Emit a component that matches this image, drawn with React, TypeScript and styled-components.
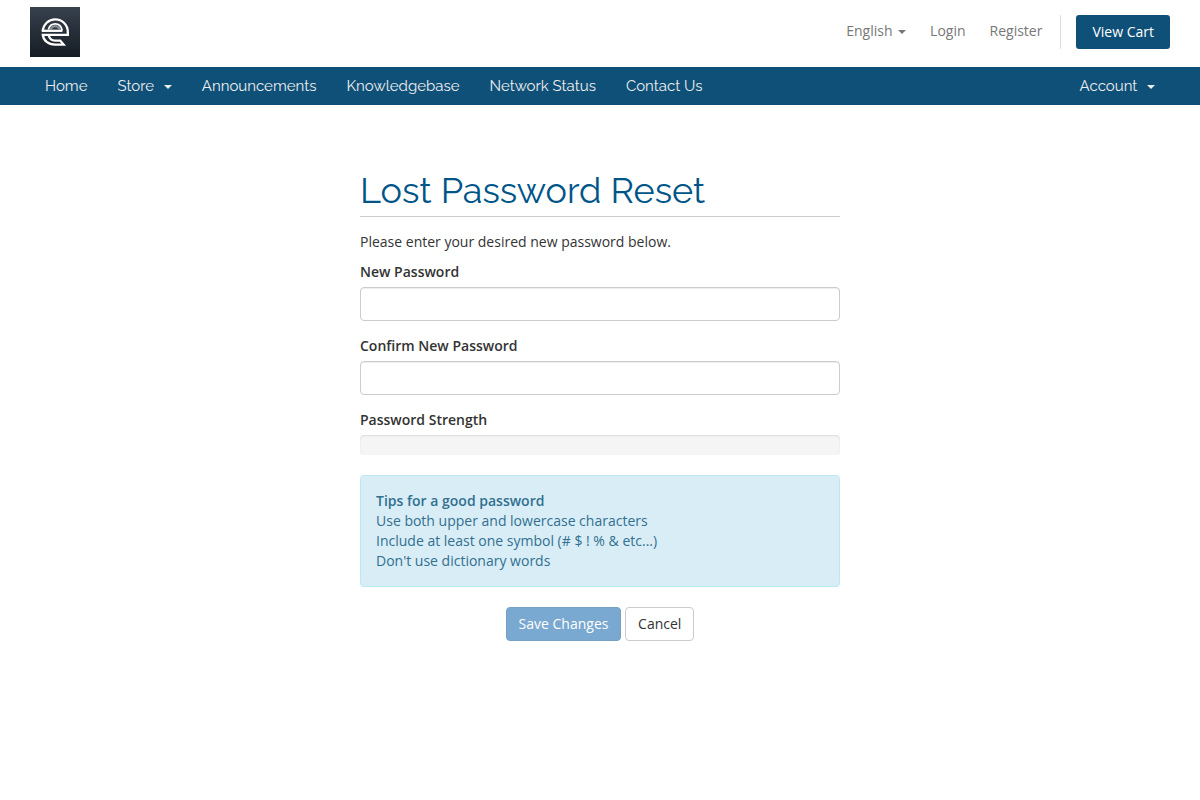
import React from "react";
import styled, { createGlobalStyle } from "styled-components";

const GlobalStyle = createGlobalStyle`
  *, *::before, *::after { box-sizing: border-box; }
  body {
    margin: 0;
    background: #fff;
    color: #333;
    font-family: "Open Sans", Verdana, Tahoma, sans-serif;
    font-size: 14px;
    line-height: 20px;
  }
  button, input { font: inherit; }
`;

const Header = styled.header`
  display: flex;
  justify-content: space-between;
  align-items: flex-start;
  padding: 7px 30px 10px;
`;

const LogoLink = styled.a`
  display: block;
  height: 50px;
  svg { display: block; }
`;

const TopMenu = styled.ul`
  display: flex;
  margin: 8px 0 0;
  padding: 0;
  list-style: none;
`;

const TopItem = styled.li<{ $action?: boolean }>`
  display: flex;
  margin-left: ${(p) => (p.$action ? "6px" : "0")};
  padding-left: ${(p) => (p.$action ? "15px" : "0")};
  border-left: ${(p) => (p.$action ? "1px solid #ddd" : "0")};
`;

const TopLink = styled.a`
  padding: 6px 12px;
  color: #777;
  text-decoration: none;
`;

const Caret = styled.b`
  display: inline-block;
  margin-left: 2px;
  vertical-align: middle;
  border-top: 4px solid;
  border-right: 4px solid transparent;
  border-left: 4px solid transparent;
`;

const CartLink = styled.a`
  padding: 7px 16px;
  border-radius: 3px;
  background: #0f5078;
  color: #fff;
  text-decoration: none;
`;

const NavBar = styled.nav`
  display: flex;
  justify-content: space-between;
  padding: 0 30px;
  background: #0f5078;
`;

const NavList = styled.ul`
  display: flex;
  margin: 0;
  padding: 0;
  list-style: none;
`;

const NavLink = styled.a`
  display: block;
  padding: 9px 15px;
  color: #eee;
  font-family: Raleway, Lato, "Open Sans", sans-serif;
  font-size: 15px;
  text-decoration: none;
`;

const Main = styled.main`
  max-width: 480px;
  margin: 0 auto;
  padding: 65px 0 40px;
`;

const Title = styled.h1`
  margin: 0 0 15px;
  padding: 0 0 6px;
  border-bottom: 1px solid #ccc;
  color: #058;
  font-family: Raleway, Lato, "Open Sans", sans-serif;
  font-size: 36px;
  font-weight: 400;
  line-height: 40px;
`;

const Intro = styled.p`
  margin: 0 0 10px;
`;

const Field = styled.div`
  margin-bottom: 15px;
`;

const Label = styled.label`
  display: block;
  margin-bottom: 5px;
  font-weight: 600;
`;

const TextInput = styled.input`
  display: block;
  width: 100%;
  height: 34px;
  padding: 6px 12px;
  border: 1px solid #ccc;
  border-radius: 4px;
  background: #fff;
  color: #555;
  box-shadow: inset 0 1px 1px rgba(0, 0, 0, 0.075);
`;

const Meter = styled.div`
  height: 20px;
  margin-bottom: 20px;
  border-radius: 4px;
  background: #f5f5f5;
  box-shadow: inset 0 1px 2px rgba(0, 0, 0, 0.1);
`;

const Tips = styled.section`
  margin-bottom: 20px;
  padding: 15px;
  border: 1px solid #bce8f1;
  border-radius: 4px;
  background: #d9edf7;
  color: #31708f;
`;

const TipsTitle = styled.strong`
  display: block;
  font-weight: 600;
`;

const TipsList = styled.ul`
  margin: 0;
  padding: 0;
  list-style: none;
`;

const Actions = styled.div`
  text-align: center;
`;

const Button = styled.button<{ $primary?: boolean }>`
  padding: 6px 12px;
  border: 1px solid ${(p) => (p.$primary ? "#2e6da4" : "#ccc")};
  border-radius: 4px;
  background: ${(p) => (p.$primary ? "#337ab7" : "#fff")};
  color: ${(p) => (p.$primary ? "#fff" : "#333")};
  line-height: 20px;
  &:disabled { opacity: 0.65; }
`;

const Logo = () => (
  <svg width="50" height="50" viewBox="0 0 50 50" role="img" aria-label="Company logo">
    <defs>
      <linearGradient id="logoShade" x1="0" y1="0" x2="0" y2="1">
        <stop offset="0" stopColor="#37414d" />
        <stop offset="1" stopColor="#151c24" />
      </linearGradient>
    </defs>
    <rect width="50" height="50" fill="url(#logoShade)" />
    <path d="M19.5 22.6C20.4 19.8 22.4 18 25.2 18C28 18 30.2 19.8 31.2 22.6H28.4C27.8 21 26.8 20.4 25.2 20.4C23.6 20.4 22.6 21 22 22.6Z" fill="#848b93" />
    <g fill="none" stroke="#fff" strokeWidth="2.3">
      <path d="M12.8 24.2C13.2 17.4 18.6 12.4 25.2 12.4C32.2 12.4 37.8 17.8 37.8 25V27.8H12.8C13.4 33.8 18.4 37.6 25 37.6H33.6L30.2 33.6H25C22 33.6 19.6 31.6 18.6 28.2" />
      <path d="M11.8 23.8H32.4" />
      <path d="M18.4 22.4C19.4 18.8 22 16.8 25.2 16.8C28.6 16.8 31.4 19.2 32.2 23.4" strokeWidth="1.7" />
    </g>
  </svg>
);

const navItems = [
  { label: "Home" },
  { label: "Store", menu: true },
  { label: "Announcements" },
  { label: "Knowledgebase" },
  { label: "Network Status" },
  { label: "Contact Us" },
];

const tips = [
  "Use both upper and lowercase characters",
  "Include at least one symbol (# $ ! % & etc...)",
  "Don't use dictionary words",
];

export default function App() {
  return (
    <>
      <GlobalStyle />
      <Header>
        <LogoLink href="#"><Logo /></LogoLink>
        <TopMenu>
          <TopItem><TopLink href="#">English <Caret /></TopLink></TopItem>
          <TopItem><TopLink href="#">Login</TopLink></TopItem>
          <TopItem><TopLink href="#">Register</TopLink></TopItem>
          <TopItem $action><CartLink href="#">View Cart</CartLink></TopItem>
        </TopMenu>
      </Header>
      <NavBar>
        <NavList>
          {navItems.map((item) => (
            <li key={item.label}>
              <NavLink href="#">
                {item.label}
                {item.menu && <> &nbsp;<Caret /></>}
              </NavLink>
            </li>
          ))}
        </NavList>
        <NavList>
          <li><NavLink href="#">Account &nbsp;<Caret /></NavLink></li>
        </NavList>
      </NavBar>
      <Main>
        <Title>Lost Password Reset</Title>
        <Intro>Please enter your desired new password below.</Intro>
        <form>
          <Field>
            <Label htmlFor="newPassword">New Password</Label>
            <TextInput id="newPassword" type="password" autoComplete="off" />
          </Field>
          <Field>
            <Label htmlFor="confirmPassword">Confirm New Password</Label>
            <TextInput id="confirmPassword" type="password" autoComplete="off" />
          </Field>
          <Label as="div" id="strengthLabel">Password Strength</Label>
          <Meter role="progressbar" aria-labelledby="strengthLabel" aria-valuemin={0} aria-valuemax={100} aria-valuenow={0} />
          <Tips>
            <TipsTitle>Tips for a good password</TipsTitle>
            <TipsList>
              {tips.map((tip) => <li key={tip}>{tip}</li>)}
            </TipsList>
          </Tips>
          <Actions>
            <Button $primary type="submit" disabled>Save Changes</Button>{" "}
            <Button type="reset">Cancel</Button>
          </Actions>
        </form>
      </Main>
    </>
  );
}
